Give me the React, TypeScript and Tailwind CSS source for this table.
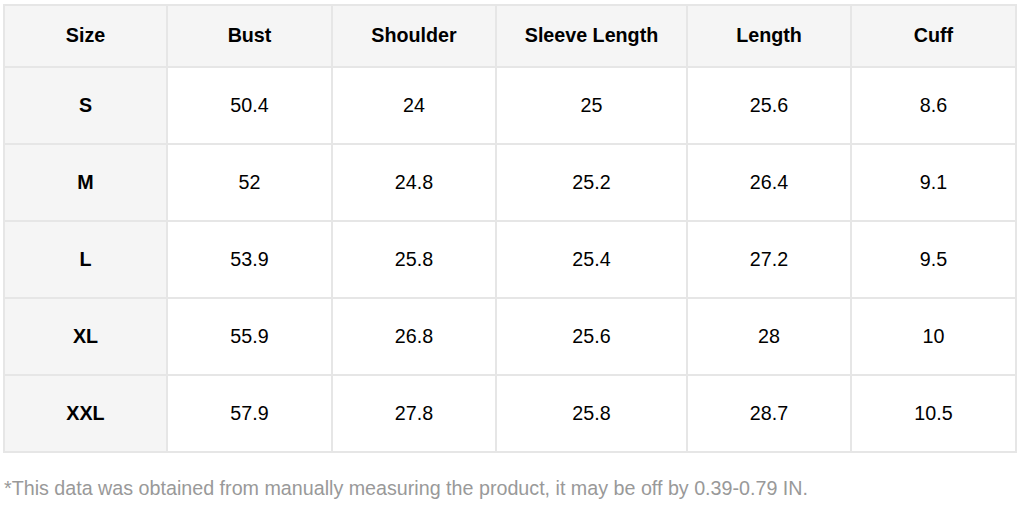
import React from "react";

const headers = ["Size", "Bust", "Shoulder", "Sleeve Length", "Length", "Cuff"];
const widths = ["w-[163px]", "w-[165px]", "w-[164px]", "w-[191px]", "w-[164px]", "w-[165px]"];

const rows = [
    ["S", "50.4", "24", "25", "25.6", "8.6"],
    ["M", "52", "24.8", "25.2", "26.4", "9.1"],
    ["L", "53.9", "25.8", "25.4", "27.2", "9.5"],
    ["XL", "55.9", "26.8", "25.6", "28", "10"],
    ["XXL", "57.9", "27.8", "25.8", "28.7", "10.5"],
];

export default function App() {
    return (
        <div className="w-[1024px] h-[505px] bg-white pl-[3px] pt-[4px] font-['Liberation_Sans',Arial,sans-serif] text-black">
            <table className="border-collapse w-[1013px] table-fixed">
                <thead>
                    <tr>
                        {headers.map((h, i) => (
                            <th
                                key={h}
                                className={`${widths[i]} h-[62px] border-2 border-[#e6e6e6] bg-[#f5f5f5] text-[19.7px] font-bold text-center align-middle`}
                            >
                                {h}
                            </th>
                        ))}
                    </tr>
                </thead>
                <tbody>
                    {rows.map((row) => (
                        <tr key={row[0]}>
                            {row.map((cell, i) => (
                                <td
                                    key={i}
                                    className={
                                        i === 0
                                            ? "h-[77px] border-2 border-[#e6e6e6] bg-[#f5f5f5] text-[19.7px] font-bold text-center align-middle"
                                            : "h-[77px] border-2 border-[#e6e6e6] bg-white text-[19.7px] text-center align-middle"
                                    }
                                >
                                    {cell}
                                </td>
                            ))}
                        </tr>
                    ))}
                </tbody>
            </table>
            <p className="mt-[21px] pl-[1px] text-[19.7px] leading-[28px] text-[#999999]">
                *This data was obtained from manually measuring the product, it may be off by 0.39-0.79 IN.
            </p>
        </div>
    );
}
